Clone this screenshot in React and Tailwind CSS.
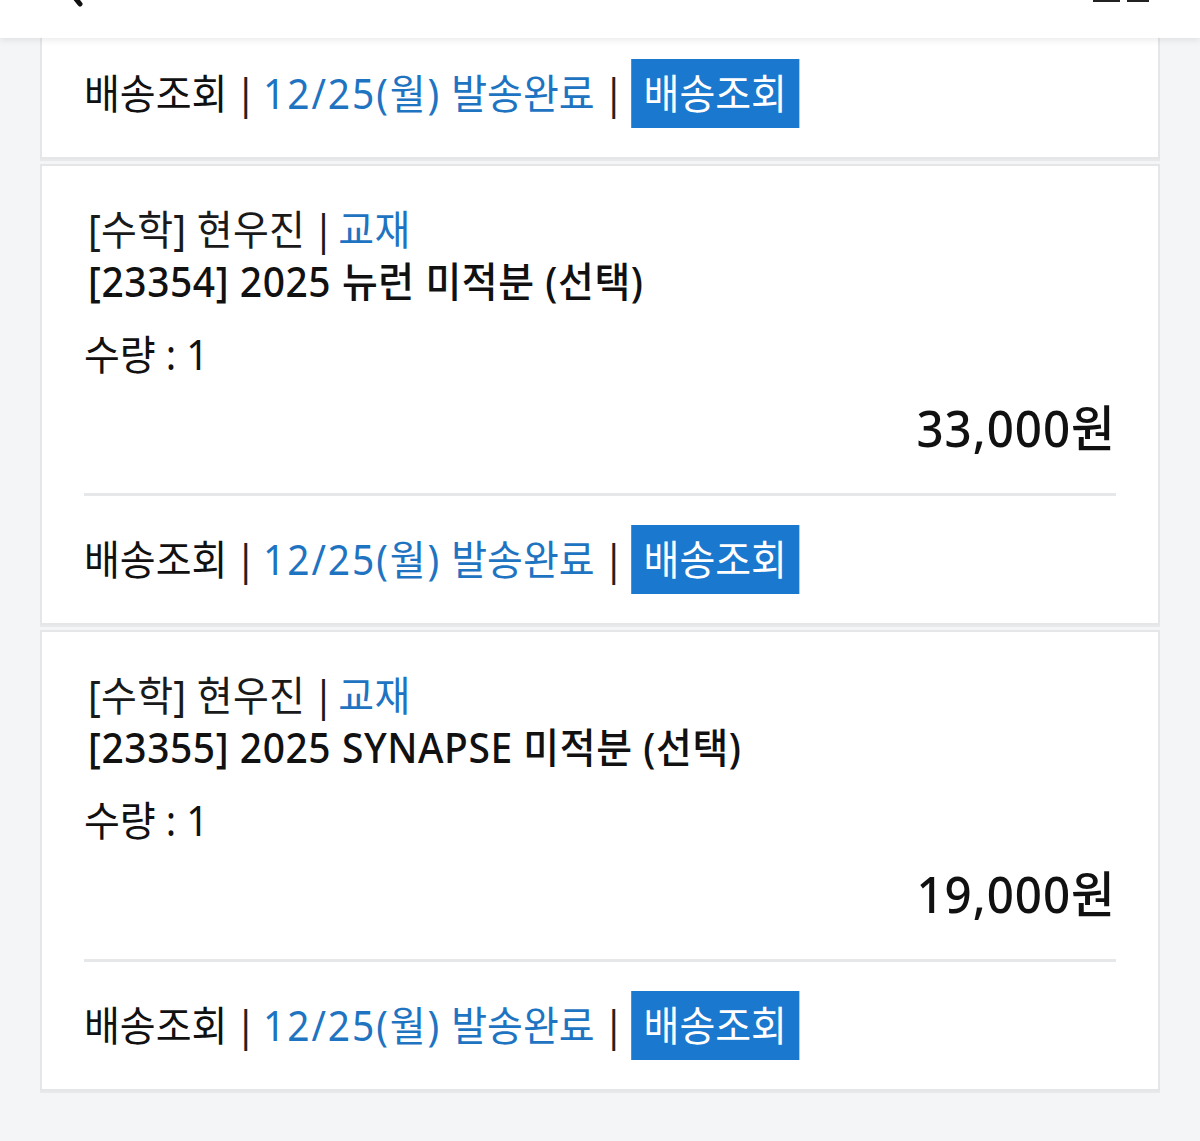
import React from "react";

const FONT = "font-['Noto_Sans','Noto_Sans_CJK_KR',sans-serif]";

function DeliveryRow() {
  return (
    <div className="h-[69px] flex items-center">
      <div className="inline-flex items-center origin-left scale-x-[0.95] whitespace-nowrap text-[41px] leading-none text-[#111]">
        <span>배송조회</span>
        <span className="ml-[8px] mr-[7px] text-[#222]">|</span>
        <span className="text-[#1f74c2]">
          <span className="tracking-[2px]">12/25(월)</span> 발송완료
        </span>
        <span className="ml-[9px] mr-[7px] text-[#222]">|</span>
        <span className="bg-[#1b78cf] text-white h-[69px] px-[13px] flex items-center">배송조회</span>
      </div>
    </div>
  );
}

function Card({ code, title, price }) {
  return (
    <div className="bg-white border-2 border-[#e5e6e8] shadow-[0_2px_0_#e8e9eb] px-[42px] pt-[37px] pb-[29px]">
      <div className="px-[4px]">
        <div className="h-[52px] flex items-center">
          <span className="inline-block origin-left scale-x-[0.95] whitespace-nowrap text-[41px] leading-none tracking-[0.3px] text-[#1a1a1a]">
            [수학] 현우진<span className="ml-[8px] mr-[4px]">|</span><span className="text-[#1f74c2]">교재</span>
          </span>
        </div>
        <div className="h-[52px] flex items-center">
          <span className="inline-block origin-left scale-x-[0.95] whitespace-nowrap text-[41px] leading-none font-medium tracking-[0.6px] text-[#111]">
            [{code}] {title}
          </span>
        </div>
      </div>
      <div className="h-[52px] mt-[21px] flex items-center">
        <span className="inline-block origin-left scale-x-[0.95] whitespace-nowrap text-[41px] leading-none text-[#111]">
          수량 : 1
        </span>
      </div>
      <div className="h-[60px] mt-[18px] flex items-center justify-end">
        <span className="inline-block origin-right scale-x-[0.95] whitespace-nowrap text-[50px] leading-none font-medium tracking-[1px] text-[#111]">
          {price}
        </span>
      </div>
      <div className="mt-[35px] h-[3px] bg-[#e6e7e9]" />
      <div className="mt-[29px]">
        <DeliveryRow />
      </div>
    </div>
  );
}

export default function App() {
  return (
    <div className={`relative w-[1200px] h-[1141px] overflow-hidden bg-[#f4f5f7] ${FONT}`}>
      <div className="absolute top-0 left-0 right-0 h-[38px] bg-white shadow-[0_3px_6px_rgba(0,0,0,0.07)] z-10">
        <svg className="absolute left-[68px] top-0" width="24" height="10" viewBox="0 0 24 10">
          <path d="M4 -6 L12 4" stroke="#111" strokeWidth="5" strokeLinecap="round" fill="none" />
        </svg>
        <div className="absolute left-[1093px] top-0 w-[27px] h-[2px] bg-[#222]" />
        <div className="absolute left-[1127px] top-0 w-[22px] h-[2px] bg-[#222]" />
      </div>
      <div className="px-[40px] pt-[28px] flex flex-col gap-[5px] w-[1200px]">
        <div className="bg-white border-2 border-[#e5e6e8] shadow-[0_2px_0_#e8e9eb] px-[42px] pt-[29px] pb-[29px]">
          <DeliveryRow />
        </div>
        <Card code="23354" title="2025 뉴런 미적분 (선택)" price="33,000원" />
        <Card code="23355" title="2025 SYNAPSE 미적분 (선택)" price="19,000원" />
      </div>
    </div>
  );
}
